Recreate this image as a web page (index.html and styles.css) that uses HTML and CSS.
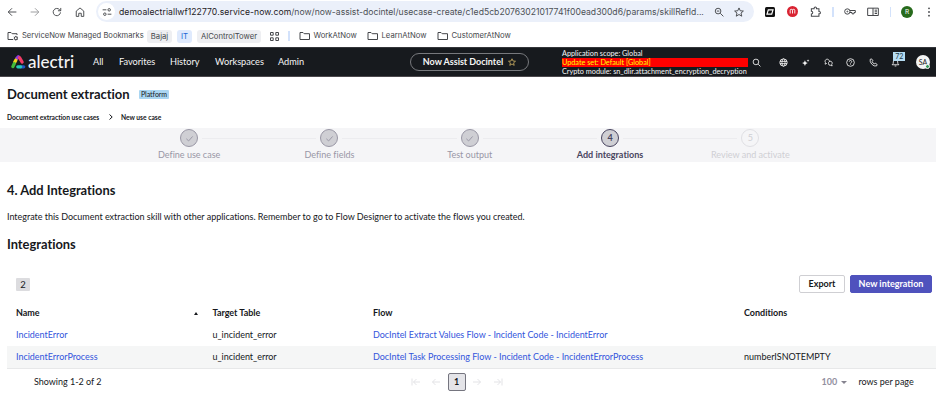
FILE: index.html
```html
<!DOCTYPE html>
<html lang="en">
<head>
<meta charset="utf-8">
<title>Document extraction</title>
<link rel="stylesheet" href="styles.css">
</head>
<body>
<header class="browser">
  <div class="toolbar">
    <div class="nav-buttons">
      <svg class="i10" viewBox="0 0 16 16"><path d="M15 8H2M8 2L2 8l6 6"/></svg>
      <svg class="i10 faded" viewBox="0 0 16 16"><path d="M1 8h13M8 2l6 6-6 6"/></svg>
      <svg class="i10" viewBox="0 0 16 16"><path d="M13.5 8.5A5.8 5.8 0 1 1 12 4.200L14 6M14 1.500V6H9.500"/></svg>
      <svg class="i10" viewBox="0 0 16 16"><path d="M2 6.500L8 1.500l6 5V15h-4v-5H6v5H2z"/></svg>
    </div>
    <div class="address">
      <span class="tune"><svg class="i10" viewBox="0 0 16 16"><path d="M1 4.500h6M9 11.500h6"/><circle cx="11.500" cy="4.500" r="2"/><circle cx="4.500" cy="11.500" r="2"/></svg></span>
      <span class="url"><b>demoalectriallwf122770.service-now.com</b><span class="path">/now/now-assist-docintel/usecase-create/c1ed5cb20763021017741f00ead300d6/params/skillRefId...</span></span>
      <svg class="i10 zoom-icon" viewBox="0 0 16 16"><circle cx="6.500" cy="6.500" r="4.500"/><path d="M10 10l5 5M4.500 6.500h4"/></svg>
      <svg class="i10" viewBox="0 0 16 16"><path d="M8 1.500l2 4.500 5 .5-3.800 3.200 1.200 5L8 12l-4.400 2.700 1.200-5L1 6.500 6 6z"/></svg>
    </div>
    <div class="extensions">
      <svg class="i10" viewBox="0 0 10 10"><rect class="black" width="10" height="10" rx="1.500"/><path class="white-line" d="M3.300 2.800h4.700L6.700 7.200H2z"/></svg>
      <svg class="i11" viewBox="0 0 11 11"><circle class="red" cx="5.500" cy="5.500" r="5.500"/><path class="white-line thin" d="M3.200 7.500V4.200q0-.9 1.100-.9t1.200.9v3.300M5.500 4.200q0-.9 1.100-.9t1.200.9v3.300"/></svg>
      <svg class="i11" viewBox="0 0 16 16"><path d="M2 4h4V3a1.700 1.700 0 0 1 3.400 0v1H13v4h.5a1.700 1.700 0 0 1 0 3.400H13V15H2v-3.500a2 2 0 0 0 0-4z"/></svg>
      <i class="sep"></i>
      <svg class="i12" viewBox="0 0 18 16"><circle cx="5" cy="8" r="4"/><circle cx="5" cy="8" r=".7"/><path d="M9 6.500h8v3h-2v2h-3v-2H9"/></svg>
      <svg class="i12" viewBox="0 0 18 16"><path d="M1 3h16v11H1zM9 3v11M11.500 6h3.500M11.500 8.500h3.500M11.500 11h3.500"/></svg>
      <i class="sep"></i>
      <span class="profile">R</span>
      <svg class="i10 dots" viewBox="0 0 10 10"><circle cx="5" cy="1.300" r=".9"/><circle cx="5" cy="5" r=".9"/><circle cx="5" cy="8.700" r=".9"/></svg>
    </div>
  </div>
  <div class="bookmarks">
    <svg class="folder" viewBox="0 0 12 10"><path d="M6 8.500H1v-7h3l1.200 1.200H10V4"/><circle cx="8.800" cy="7.200" r="1.500"/><path d="M8.800 4.900v1M8.800 8.500v1M6.800 6l.8.500M10.800 6l-.8.500M6.800 8.400l.8-.5M10.800 8.400l-.8-.5"/></svg>
    <span class="managed">ServiceNow Managed Bookmarks</span>
    <span class="chip bajaj">Bajaj</span>
    <span class="chip blue">IT</span>
    <span class="chip tower">AIControlTower</span>
    <svg class="grid-icon" viewBox="0 0 9 9"><path d="M.5.5h2.700v2.700H.5zM5.800.5h2.700v2.700H5.800zM.5 5.800h2.700v2.700H.5zM5.800 5.800h2.700v2.700H5.800z"/></svg>
    <i class="sep"></i>
    <span class="mark work"><svg class="folder" viewBox="0 0 12 10"><path d="M1 1.500h3l1.200 1.200h5.300v5.800H1z"/></svg>WorkAtNow</span>
    <span class="mark learn"><svg class="folder" viewBox="0 0 12 10"><path d="M1 1.500h3l1.200 1.200h5.300v5.800H1z"/></svg>LearnAtNow</span>
    <span class="mark"><svg class="folder" viewBox="0 0 12 10"><path d="M1 1.500h3l1.200 1.200h5.300v5.800H1z"/></svg>CustomerAtNow</span>
  </div>
</header>

<nav class="appbar">
  <div class="brand">
    <svg class="logo" viewBox="0 0 15 14"><path class="l-purple" d="M5.900 3.400L7.300 1.800"/><path class="l-pink" d="M8.500 2.700l2.600 4.300"/><path class="l-yellow" d="M4.800 5.200L3.700 7.300"/><path class="l-green" d="M3.200 8.800L1.900 11.600"/><path class="l-blue" d="M9.800 11.800h2.900"/><path class="l-teal" d="M6.800 11.800h2.800"/></svg>
    <span class="brand-name">alectri</span>
  </div>
  <div class="menu"><span class="m1">All</span><span class="m2">Favorites</span><span class="m3">History</span><span class="m4">Workspaces</span><span>Admin</span></div>
  <div class="context"><span>Now Assist Docintel</span><svg viewBox="0 0 16 16"><path d="M8 1.500l2 4.500 5 .5-3.800 3.200 1.200 5L8 12l-4.400 2.700 1.200-5L1 6.500 6 6z"/></svg></div>
  <div class="scope"><span>Application scope: Global</span><span class="update">Update set: Default [Global]</span><span>Crypto module: sn_dlir.attachment_encryption_decryption</span></div>
  <svg class="search" viewBox="0 0 16 16"><circle cx="7" cy="7" r="5"/><path d="M11 11l4 4"/></svg>
  <div class="tools">
    <svg viewBox="0 0 16 16"><circle cx="8" cy="8" r="6.500"/><ellipse cx="8" cy="8" rx="2.800" ry="6.500"/><path d="M1.500 6h13M1.500 10h13"/></svg>
    <svg viewBox="0 0 16 16"><path class="solid" d="M7 4l1.500 3.500L12 9l-3.500 1.500L7 14l-1.500-3.500L2 9l3.500-1.500zM12.500 2l.7 1.800 1.800.7-1.800.7-.7 1.800-.7-1.800-1.800-.7 1.800-.7z"/></svg>
    <svg viewBox="0 0 16 16"><path d="M5 9.500L2 11l.5-3A3.800 3.800 0 1 1 9.500 6M8 9.500a3.300 3.300 0 1 1 5.700 1.800l.8 2.700-2.800-1A3.300 3.300 0 0 1 8 9.500z"/></svg>
    <svg viewBox="0 0 16 16"><circle cx="8" cy="8" r="6.800"/><path d="M5.800 6.500a2.200 2.200 0 1 1 3.300 1.900Q8 9 8 10M8 11.200v1"/></svg>
    <svg viewBox="0 0 16 16"><path d="M2 2.500l2.500-1L7 5 5.500 6.500q1 2.500 4 4L11 9l3.500 2.500-1 2.500Q9 15.500 5 11T2 2.500z"/></svg>
    <span class="bell"><svg viewBox="0 0 16 16"><path d="M2 12h12l-2-2.500V7a4 4 0 0 0-8 0v2.500zM6.500 14.200h3"/></svg><b class="count">72</b></span>
  </div>
  <span class="user">SA<i></i></span>
</nav>

<main>
  <div class="title-row"><h1>Document extraction</h1><span class="tag">Platform</span></div>
  <div class="crumbs"><span class="c1">Document extraction use cases</span><svg viewBox="0 0 6 8"><path d="M1.500 1.500L4.200 4 1.500 6.500"/></svg><span class="c2">New use case</span></div>
  <ol class="stepper">
    <li class="done"><span class="dot"><svg viewBox="0 0 10 10"><path d="M1.500 5.300L4 7.700l4.500-5"/></svg></span><span>Define use case</span></li>
    <li class="done"><span class="dot"><svg viewBox="0 0 10 10"><path d="M1.500 5.300L4 7.700l4.500-5"/></svg></span><span>Define fields</span></li>
    <li class="done"><span class="dot"><svg viewBox="0 0 10 10"><path d="M1.500 5.300L4 7.700l4.500-5"/></svg></span><span>Test output</span></li>
    <li class="current"><span class="dot">4</span><span>Add integrations</span></li>
    <li class="todo"><span class="dot">5</span><span>Review and activate</span></li>
  </ol>
  <h2 class="h-step">4. Add Integrations</h2>
  <p class="intro">Integrate this Document extraction skill with other applications. Remember to go to Flow Designer to activate the flows you created.</p>
  <h2 class="h-list">Integrations</h2>
  <div class="list-bar"><span class="total">2</span><div class="actions"><button class="export">Export</button><button class="primary">New integration</button></div></div>
  <div class="table">
    <div class="row head"><span>Name<i class="caret-up"></i></span><span>Target Table</span><span>Flow</span><span>Conditions</span></div>
    <div class="row"><a>IncidentError</a><span>u_incident_error</span><a>DocIntel Extract Values Flow - Incident Code - IncidentError</a><span></span></div>
    <div class="row alt"><a>IncidentErrorProcess</a><span>u_incident_error</span><a>DocIntel Task Processing Flow - Incident Code - IncidentErrorProcess</a><span>numberISNOTEMPTY</span></div>
  </div>
  <footer class="pager">
    <span class="showing">Showing 1-2 of 2</span>
    <div class="pages">
      <svg viewBox="0 0 10 10"><path d="M1 1.500v7M9 5H2.500M5.500 2l-3 3 3 3"/></svg>
      <svg viewBox="0 0 10 10"><path d="M9 5H1.500M4.500 2l-3 3 3 3"/></svg>
      <b>1</b>
      <svg viewBox="0 0 10 10"><path d="M1 5h7.500M5.500 2l3 3-3 3"/></svg>
      <svg viewBox="0 0 10 10"><path d="M9 1.500v7M1 5h6.500M4.500 2l3 3-3 3"/></svg>
    </div>
    <div class="per-page"><b>100</b><i class="caret-down"></i><span>rows per page</span></div>
  </footer>
</main>
</body>
</html>
```
FILE: styles.css
```css
* { box-sizing: border-box; }
body { margin: 0; width: 936px; height: 418px; overflow: hidden; background: #fff; color: #16181c; font: 9px/12px Lato, sans-serif; letter-spacing: -.02px; white-space: nowrap; }
svg { display: block; flex: none; fill: none; stroke: currentColor; stroke-width: 1.5; }
h1, h2, p, ol { margin: 0; padding: 0; }
a { color: #3355dc; }

.browser { height: 47px; color: #45474b; font-family: Inter, sans-serif; letter-spacing: 0; }
.toolbar { display: flex; height: 23px; align-items: center; }
.nav-buttons { display: flex; width: 96px; flex: none; padding-left: 7px; gap: 12.5px; }
.i10 { width: 10px; height: 10px; }
.i11 { width: 11px; height: 11px; }
.i12 { width: 12px; height: 11px; }
.faded { opacity: .55; }
.address { display: flex; width: 658px; height: 21px; flex: none; align-items: center; padding: 0 10px 0 2px; background: #ebf0fa; border-radius: 11px; }
.tune { display: flex; width: 17px; height: 17px; flex: none; align-items: center; justify-content: center; background: #fff; border-radius: 50%; }
.url { flex: 1; min-width: 0; margin-left: 4px; font-size: 8.650px; }
.url b { color: #1f2125; font-weight: 400; letter-spacing: .07px; }
.path { color: #4d5056; }
.zoom-icon { margin-right: 10px; }
.extensions { display: flex; align-items: center; margin-left: 11px; }
.extensions > :nth-child(2) { margin-left: 12px; }
.extensions > :nth-child(3) { margin-left: 12px; }
.sep { width: 1.500px; height: 10px; background: #d3e2fb; }
.extensions .sep { margin: 0 10px 0 11px; }
.extensions > :nth-child(6) { margin-left: 11px; }
.black { fill: #111; stroke: none; }
.red { fill: #d92332; stroke: none; }
.white-line { stroke: #fff; stroke-width: 1.2; }
.thin { stroke-width: .9; }
.profile { width: 12px; height: 12px; border-radius: 50%; background: #276a1c; color: #fff; font-size: 6.500px; text-align: center; }
.dots { margin-left: 11px; fill: currentColor; stroke: none; }
.bookmarks { display: flex; height: 24px; align-items: center; padding: 2px 0 0 7px; font-size: 7.700px; }
.folder { width: 12px; height: 10px; stroke-width: 1; }
.managed { width: 119px; margin: 0 6px 0 3px; font-size: 7.600px; }
.chip { height: 13px; margin-right: 5px; border-radius: 3px; background: #eeeff2; text-align: center; line-height: 13px; }
.bajaj { width: 25px; }
.blue { width: 15px; background: #dfeafd; color: #2266d5; }
.tower { width: 64px; margin-right: 9px; }
.grid-icon { width: 9px; height: 9px; margin-right: 9px; stroke-width: 1; }
.mark { display: flex; align-items: center; gap: 3px; }
.work { width: 68px; margin-left: 9px; }
.learn { width: 70px; }

.appbar { display: flex; height: 30px; align-items: center; background: #171a1e; border-top: 1px solid #34363a; border-bottom: 1px solid #4b484c; color: #f5f5f5; }
.brand { display: flex; width: 93px; align-items: center; padding-left: 11px; }
.logo { width: 15px; height: 14px; stroke-width: 3.3; stroke-linecap: round; }
.l-purple { stroke: #8d39dd; } .l-pink { stroke: #f23c66; } .l-yellow { stroke: #f1d41b; } .l-green { stroke: #43b93a; } .l-teal { stroke: #26c9b6; } .l-blue { stroke: #2058c4; }
.brand-name { margin-left: 2px; font: 500 17px/20px Lato, sans-serif; }
.menu { display: flex; width: 317px; font-size: 9.2px; }
.m1 { width: 26px; } .m2 { width: 51px; } .m3 { width: 45px; } .m4 { width: 63px; }
.context { display: flex; width: 119px; height: 18px; align-items: center; justify-content: center; gap: 5px; border: 1px solid #77797d; border-radius: 9px; font-size: 9px; font-weight: 700; }
.context svg { width: 8px; height: 8px; color: #d9b968; }
.scope { display: flex; flex-direction: column; width: 186px; margin-left: 33px; font-size: 7.300px; line-height: 9px; }
.update { background: #f00; color: #ff0; }
.search { width: 9px; height: 9px; margin-left: 4px; }
.tools { display: grid; width: 135px; margin-left: 11px; grid-template-columns: repeat(6, 22.500px); justify-items: center; align-items: center; }
.tools svg { width: 9px; height: 9px; }
.solid { fill: currentColor; stroke: none; }
.bell { position: relative; }
.count { position: absolute; left: 2px; top: -6px; width: 12px; height: 9px; background: #b5dcf2; color: #173848; font: 7px/9px Lato, sans-serif; text-align: center; }
.user { position: relative; width: 14px; height: 14px; margin-left: 9px; border-radius: 50%; background: #f3f4f4; color: #222; font-size: 7px; line-height: 14px; text-align: center; }
.user i { position: absolute; right: 0; bottom: 0; width: 5px; height: 5px; border: 1px solid #fff; border-radius: 50%; background: #37995c; }

.title-row { display: flex; height: 34px; align-items: center; padding-left: 7px; }
h1 { width: 132px; font: 700 13px/18px Lato, sans-serif; }
.tag { width: 30px; height: 9px; background: #aad6f2; border-radius: 1px; font-size: 7px; line-height: 9px; text-align: center; }
.crumbs { display: flex; height: 17px; align-items: center; padding: 0 0 5px 7px; font-size: 6.700px; font-weight: 700; }
.c1 { width: 93px; }
.crumbs svg { width: 6px; height: 8px; margin: 0 7px 0 8px; stroke-width: 1; }
.stepper { display: grid; height: 34px; margin: 0; padding: 1px 0 0 119px; grid-template-columns: repeat(5, 140.300px); background: #f5f5f7; list-style: none; font-size: 9.050px; }
.stepper li { display: grid; grid-template-columns: 1fr 26px 1fr; grid-template-rows: 18px 14px; justify-items: center; align-items: center; color: #9997a6; }
.stepper li::before, .stepper li::after { content: ""; grid-row: 1; width: 100%; height: 1px; background: #ececef; }
.stepper li::before { grid-column: 1; }
.stepper li::after { grid-column: 3; }
.stepper li:first-child::before, .stepper li:last-child::after { visibility: hidden; }
.dot { display: flex; grid-column: 2; grid-row: 1; width: 18px; height: 18px; align-items: center; justify-content: center; border: 1px solid #9997a5; border-radius: 50%; background: #cfcfd4; }
.dot svg { width: 9px; height: 9px; stroke-width: 1.1; }
.dot + span { grid-column: 1 / 4; grid-row: 2; padding-top: 2px; }
.stepper .current { color: #494560; font-weight: 700; }
.current .dot { border-color: #494560; }
.stepper .todo { color: #cfcfd4; }
.todo .dot { border-color: #e0e0e4; background: transparent; }
h2 { padding-left: 7px; font: 700 12.900px/18px Lato, sans-serif; }
.h-step { margin-top: 19px; }
.intro { margin: 12px 0 12px; padding-left: 7px; }
.list-bar { display: flex; height: 18px; margin: 22px 4px 0 16px; align-items: center; justify-content: space-between; }
.total { width: 14px; height: 13px; background: #dcdcdf; border-radius: 1px; font-size: 9.500px; line-height: 13px; text-align: center; }
.actions { display: flex; gap: 5px; }
button { height: 18px; padding: 0; border: 1px solid #cfcfd3; border-radius: 2px; background: #fff; color: #16181c; font: 700 9px/14px Lato, sans-serif; }
.export { width: 46px; }
.primary { width: 82px; border-color: #4f52bd; background: #4f52bd; color: #fff; }
.table { margin: 9px 0 0 7px; }
.row { display: grid; height: 22px; padding-left: 9px; grid-template-columns: 196.500px 160.500px 371px 1fr; align-items: center; }
.head { font-weight: 700; }
.head > :first-child { display: flex; width: 182px; align-items: center; justify-content: space-between; }
.caret-up { border: 2.500px solid transparent; border-top: 0; border-bottom: 3px solid #16181c; }
.row.alt { height: 23px; background: #f5f6f6; border-bottom: 1px solid #e7e8e9; }
.pager { display: flex; height: 26px; align-items: center; padding-left: 34px; }
.showing { width: 376.500px; }
.pages { display: flex; width: 411px; align-items: center; gap: 10.500px; color: #dcdce0; }
.pages svg { width: 10px; height: 10px; stroke-width: .8; }
.pages b { width: 18px; height: 18px; margin: 0 -4px 0 -4px; border: 1px solid #75757f; border-radius: 2px; background: #e4e4e8; color: #16181c; line-height: 16px; text-align: center; }
.per-page { display: flex; align-items: center; }
.per-page b { width: 19px; color: #9290a0; }
.caret-down { margin-right: 12px; border: 3px solid transparent; border-bottom: 0; border-top: 3.500px solid #85838f; }
```
